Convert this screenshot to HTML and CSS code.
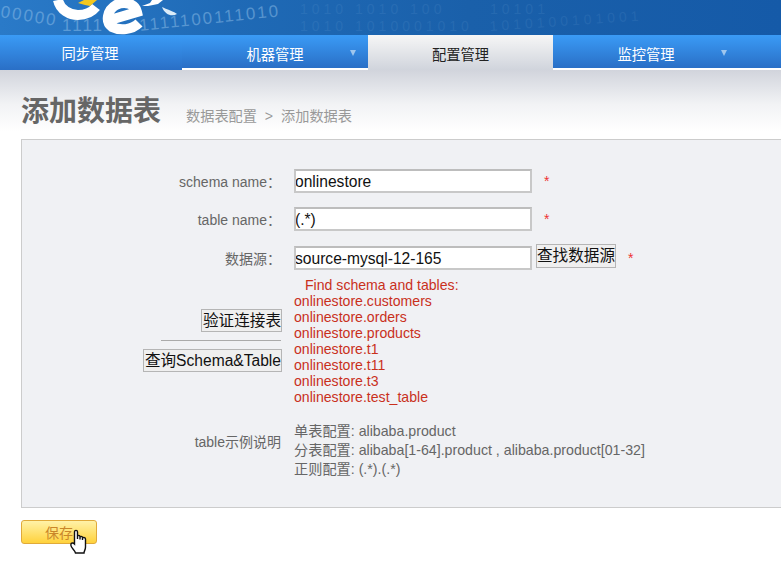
FILE: index.html
```html
<!doctype html>
<html>
<head>
<meta charset="utf-8">
<link rel="stylesheet" href="styles.css">
<title>添加数据表</title>
</head>

<body>

<div id="header">
	<svg class="header-art" width="781" height="35" viewBox="0 0 781 35">
		<g class="digits">
			<text x="0" y="17" transform="rotate(9 0 17)">00000</text>
			<text x="62" y="31">1111</text>
			<text x="140" y="31" transform="rotate(-6 140 31)">1111100111010</text>
		</g>
		<g class="digits faint">
			<text x="300" y="14">1010 1010 100</text>
			<text x="300" y="31">1010 1010001010</text>
			<text x="490" y="14">10101</text>
			<text x="490" y="31" transform="rotate(-4 490 31)">1010100101001</text>
		</g>
		<path class="logo-c" d="M58 0 C60 10 70 15 78 15 C86 15 92 12 96 7"/>
		<path class="logo-e" d="M110 20 L137 12 C135 3 124 1 116 5 C107 10 105 22 112 27 C120 31 132 30 139 23"/>
		<path class="logo-y" d="M78 3 L84 0 L97 0 L90 6 L85 5 Z"/>
		<path class="logo-w" d="M142 6 L150 3 L152 0 L163 0 L158 4 L148 6 Z"/>
		<path class="logo-drop" d="M162 7 C166 9 175 12 177 14 C172 17 165 15 162 7 Z"/>
	</svg>
</div>

<div id="nav">
	<div class="tab tab-first">同步管理</div>
	<div class="tab">机器管理<span class="arrow"></span></div>
	<div class="tab active">配置管理</div>
	<div class="tab">监控管理<span class="arrow"></span></div>
	<div class="tab-rest"></div>
</div>

<div id="title">
	<h1>添加数据表</h1>
	<span class="crumbs">数据表配置 &nbsp;&gt;&nbsp; 添加数据表</span>
</div>

<div id="formbox">
	<div class="row row1">
		<label>schema name：</label>
		<div class="field"><input type="text" value="onlinestore"><span class="star">*</span></div>
	</div>
	<div class="row row2">
		<label>table name：</label>
		<div class="field"><input type="text" value="(.*)"><span class="star">*</span></div>
	</div>
	<div class="row row3">
		<label>数据源：</label>
		<div class="field"><input type="text" value="source-mysql-12-165"><button class="btn find">查找数据源</button><span class="star">*</span></div>
	</div>
	<div class="row row4">
		<div class="actions">
			<button class="btn">验证连接表</button>
			<div class="sep"></div>
			<button class="btn">查询Schema&amp;Table</button>
		</div>
		<div class="result">
			<div class="result-head">Find schema and tables:</div>
			<div>onlinestore.customers</div>
			<div>onlinestore.orders</div>
			<div>onlinestore.products</div>
			<div>onlinestore.t1</div>
			<div>onlinestore.t11</div>
			<div>onlinestore.t3</div>
			<div>onlinestore.test_table</div>
		</div>
	</div>
	<div class="row row5">
		<label>table示例说明</label>
		<div class="examples">
			<div>单表配置: alibaba.product</div>
			<div>分表配置: alibaba[1-64].product , alibaba.product[01-32]</div>
			<div>正则配置: (.*).(.*)</div>
		</div>
	</div>
</div>

<div id="savebar">
	<button class="save">保存</button>
	<svg class="hand" width="18" height="26" viewBox="0 0 18 26">
		<path d="M4.5 15 L4.5 3 C4.5 0.8 7.5 0.8 7.5 3 L7.5 10 L7.5 7.5 C7.5 6 10 6 10 7.5 L10 10.5 L10 8.5 C10 7 12.5 7 12.5 8.5 L12.5 11 L12.5 9.5 C12.5 8 15.5 8 15.5 10 L15.5 18 C15.5 21 14 22 14 24 L5.5 24 C5 21.5 1 19 0.8 16 C0.8 13.5 3 13.5 4.5 15 Z"/>
	</svg>
</div>

</body>
</html>
```

FILE: styles.css
```css
*
{
	box-sizing:border-box;
}
html,body
{
	margin:0;
	padding:0;
	height:581px;
	overflow:hidden;
	background:#fff;
	font-family:"Liberation Sans","Noto Sans CJK SC",sans-serif;
	font-size:14px;
}
#header
{
	height:35px;
	background:linear-gradient(90deg,#2a7ac8 0%,#1f6ab6 30%,#1a60aa 60%,#155aa8 100%);
}
.header-art
{
	display:block;
}
.digits text
{
	font-family:"Liberation Sans",sans-serif;
	font-size:17px;
	letter-spacing:2px;
	fill:#8fbfe8;
	opacity:.5;
}
.digits.faint text
{
	font-size:14px;
	letter-spacing:4px;
	opacity:.1;
}
.logo-c,.logo-e
{
	fill:none;
	stroke:#fff;
	stroke-width:10;
}
.logo-y
{
	fill:#f4c81e;
}
.logo-w
{
	fill:#fff;
}
.logo-drop
{
	fill:#dcecf8;
}
#nav
{
	display:flex;
	height:35px;
}
.tab,.tab-rest
{
	background:linear-gradient(#3a9bf6,#2a6fc6);
	border-bottom:2px solid #fff;
}
.tab
{
	position:relative;
	width:186px;
	color:#fff;
	text-align:center;
	line-height:38px;
	font-family:"Noto Sans CJK SC",sans-serif;
	font-size:14.3px;
}
.tab-first
{
	width:182px;
	padding-right:2px;
	line-height:36px;
	border-bottom:0;
}
.tab-rest
{
	flex:1;
}
.tab.active
{
	width:185px;
	color:#222;
	background:linear-gradient(#f6f6f6,#d0d4dc);
	border-bottom:0;
}
.arrow
{
	position:absolute;
	top:15px;
	right:12px;
	border-top:6px solid #9fc6ee;
	border-left:3.5px solid transparent;
	border-right:3.5px solid transparent;
}
#title
{
	display:flex;
	align-items:flex-end;
	height:69px;
	padding:0 0 10px 21px;
	background:linear-gradient(#d1d4dc,#f2f3f5 50%,#fff 90%);
}
h1
{
	margin:0;
	font-size:28px;
	line-height:40px;
	font-weight:bold;
	color:#666;
	font-family:"Noto Sans CJK SC",sans-serif;
}
.crumbs
{
	margin:0 0 3px 25px;
	color:#999;
	font-size:14.2px;
	line-height:20px;
}
#formbox
{
	height:369px;
	margin-left:21px;
	border:1px solid #ccc;
	border-right:0;
	background:#f0f1f4;
	padding-top:29px;
}
.row
{
	display:grid;
	grid-template-columns:259px 1fr;
	column-gap:13px;
	align-items:center;
}
.row label
{
	text-align:right;
	color:#666;
	font-size:14px;
}
.row2
{
	margin-top:14px;
}
.row3
{
	margin-top:15px;
}
.row4
{
	margin-top:7px;
	align-items:start;
}
.row5
{
	margin-top:17px;
	align-items:start;
}
.row5 label
{
	padding-top:9px;
}
.field
{
	display:flex;
	align-items:flex-start;
}
input
{
	width:238px;
	height:24px;
	padding:2px 0 0;
	border:2px solid #c8c8c8;
	border-top-color:#bdbdbd;
	background:#fff;
	color:#111;
	font-family:"Liberation Sans",sans-serif;
	font-size:15.6px;
	text-indent:-1px;
}
.star
{
	margin:2px 0 0 12px;
	color:#e33;
	font-size:14px;
	line-height:20px;
}
.btn
{
	height:23px;
	padding:0;
	border:1px solid #b5b5b5;
	background:#efefef;
	color:#111;
	font-family:"Liberation Sans","Noto Sans CJK SC",sans-serif;
	font-size:15.6px;
	line-height:20px;
}
.find
{
	height:24px;
	margin:-2px 0 0 4px;
}
.actions
{
	display:flex;
	flex-direction:column;
	align-items:flex-end;
	margin-right:-1px;
	padding-top:32px;
}
.actions .btn
{
	padding-left:1px;
}
.sep
{
	width:120px;
	height:1px;
	margin:8px 1px 8px 0;
	background:#aaa;
}
.result
{
	color:#c9301c;
	font-size:14.1px;
	line-height:16px;
}
.result-head
{
	padding-left:11px;
}
.examples
{
	color:#666;
	font-size:14.2px;
	line-height:19px;
}
#savebar
{
	position:relative;
	padding:12px 0 0 21px;
}
.save
{
	display:block;
	width:76px;
	height:24px;
	padding:0;
	border:1px solid #e0aa3a;
	border-radius:3px;
	background:linear-gradient(#fff2a8,#ffd23c);
	color:#c9862a;
	font-family:"Noto Sans CJK SC",sans-serif;
	font-size:14px;
}
.hand
{
	position:absolute;
	left:70px;
	top:21px;
}
.hand path
{
	fill:#fff;
	stroke:#111;
	stroke-width:1.4;
}
```
